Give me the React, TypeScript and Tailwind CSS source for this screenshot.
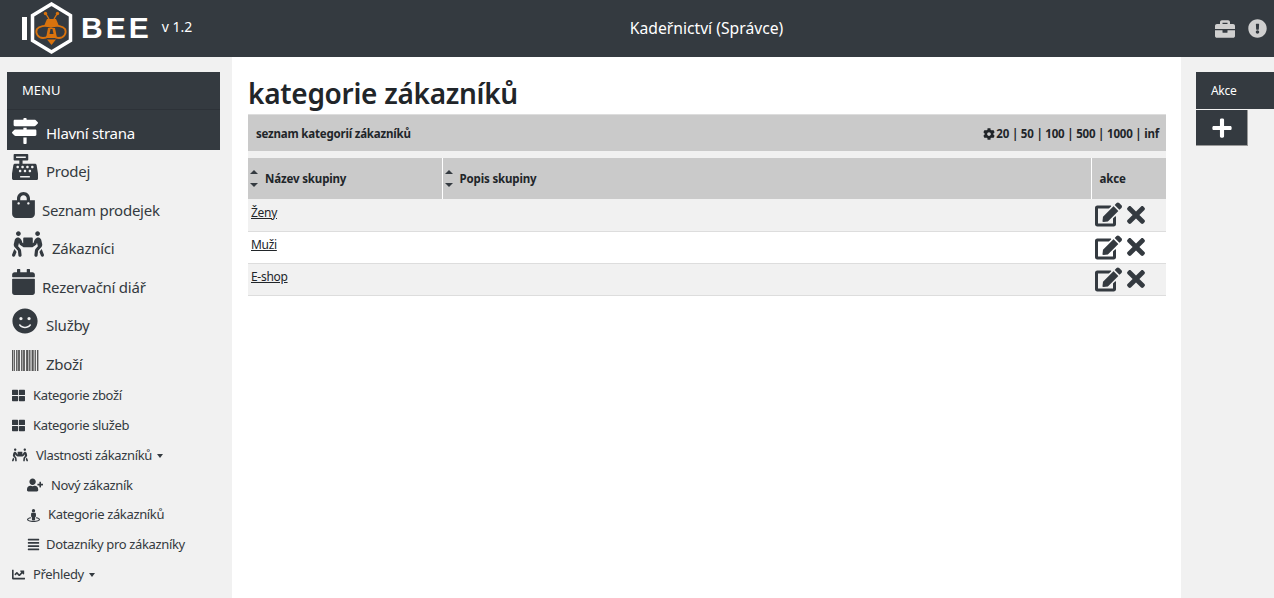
import React from "react";
import {
  FaAlignJustify,
  FaBriefcase,
  FaCalendar,
  FaCashRegister,
  FaChartLine,
  FaCog,
  FaEdit,
  FaExclamationCircle,
  FaMapSigns,
  FaPeopleCarry,
  FaPlus,
  FaShoppingBag,
  FaSmile,
  FaStreetView,
  FaTable,
  FaThLarge,
  FaTimes,
  FaUserPlus,
} from "react-icons/fa";

const Barcode = () => (
  <svg width="27" height="21" viewBox="0 0 27 21" className="shrink-0 mb-[4px] mr-[-1px]">
    {[0, 2, 4, 5.5, 7, 9, 10.5, 12, 14, 15, 17, 18.5, 20, 21.5, 23, 25].map((x, i) => (
      <rect key={i} x={x} y="0" width={i % 3 === 0 ? 1.4 : 0.9} height="21" fill="#555" />
    ))}
  </svg>
);

const Logo = () => (
  <div className="flex items-center pl-[22px] h-full">
    <span className="w-[5px] h-[23px] bg-white mt-[-1px]" />
    <svg width="48" height="54" viewBox="0 0 48 54" className="shrink-0">
      <polygon points="24.5,2 43.5,13.5 43.5,38.5 24.5,50 5.5,38.5 5.5,13.5" fill="none" stroke="#fff" strokeWidth="3.5" />
      <g fill="none" stroke="#d9730d">
        <path
          d="M24 25C18 23 12 24 10 27C8 31 11 36 16 36C20 36 23 33 24 29C25 33 28 36 32 36C37 36 40 31 38 27C36 24 30 23 24 25Z"
          strokeWidth="1.8"
        />
        <path d="M19 12l3 5M30 12l-3 5" strokeWidth="1.4" />
      </g>
      <g fill="#d9730d">
        <circle cx="18.5" cy="11.5" r="1.7" />
        <circle cx="30.5" cy="11.5" r="1.7" />
        <path d="M20 17h9l3 7h-15z" />
        <polygon points="21,26 28,26 30,36 19,36" />
        <polygon points="20,37.5 29,37.5 24.5,43" />
      </g>
      <polygon points="23.5,27 25.5,27 26.5,32 22.5,32" fill="#343a40" />
    </svg>
    <span className="font-['Liberation_Sans',sans-serif] font-bold text-white text-[30px] leading-none tracking-[3px] ml-[6px] mt-[-1px]">
      BEE
    </span>
    <span className="text-white text-[14px] ml-[10px] mb-[5px]">v 1.2</span>
  </div>
);

const mainItems = [
  { label: "Prodej", icon: <FaCashRegister className="w-[26px] h-[26px] shrink-0 mb-[3px]" /> },
  { label: "Seznam prodejek", icon: <FaShoppingBag className="w-[23px] h-[26px] shrink-0 mb-[3px] mr-[-1px]" /> },
  { label: "Zákazníci", icon: <FaPeopleCarry className="w-[32px] h-[26px] shrink-0 mb-[3px]" /> },
  { label: "Rezervační diář", icon: <FaCalendar className="w-[23px] h-[26px] shrink-0 mb-[3px] mr-[-1px]" /> },
  { label: "Služby", icon: <FaSmile className="w-[26px] h-[26px] shrink-0 mb-[3px]" /> },
  { label: "Zboží", icon: <Barcode /> },
];

const Caret = () => (
  <span className="inline-block ml-[5px] align-middle border-t-[4px] border-x-[3.5px] border-x-transparent border-t-[#343a40]" />
);

const SortArrows = () => (
  <span className="flex flex-col gap-[9px] shrink-0">
    <span className="border-b-[4px] border-x-[4px] border-x-transparent border-b-[#343a40]" />
    <span className="border-t-[4px] border-x-[4px] border-x-transparent border-t-[#343a40]" />
  </span>
);

const SmallItem = ({
  icon,
  label,
  caret,
  sub,
}: {
  icon: React.ReactNode;
  label?: string;
  caret?: boolean;
  sub?: boolean;
}) => (
  <div className={`flex items-center h-[29.8px] gap-2 text-[13px] text-[#343a40] ${sub ? "pl-[27px]" : "pl-[12px]"}`}>
    {icon}
    {label && (
      <span className="tracking-[-0.35px]">
        {label}
        {caret && <Caret />}
      </span>
    )}
  </div>
);

const rows = ["Ženy", "Muži", "E-shop"];

export default function App() {
  return (
    <div className="h-screen overflow-hidden bg-white font-['Noto_Sans',sans-serif] text-[#212529]">
      <header className="grid grid-cols-[232px_1fr_93px] h-[57px] bg-[#343a40] text-white">
        <div className="whitespace-nowrap">
          <Logo />
        </div>
        <div className="flex items-center justify-center text-[15.7px]">Kadeřnictví (Správce)</div>
        <div className="flex items-center justify-end gap-[13px] pr-[7px] text-[#cfcfcf]">
          <FaBriefcase size={20} />
          <FaExclamationCircle size={19} />
        </div>
      </header>

      <div className="grid grid-cols-[232px_1fr_93px] h-[541px]">
        <aside className="bg-[#f1f1f1] pt-[15px]">
          <div className="ml-[7px] mr-[12px] bg-[#343a40] text-white">
            <div className="h-[38px] flex items-center pl-[15px] pt-px text-[13px] border-b border-[#2d3238]">MENU</div>
            <div className="h-[40px] flex items-end gap-2 pl-[5px] pb-[6px] text-[15px]">
              <FaMapSigns size={26} className="shrink-0" />
              <span className="tracking-[-0.3px]">Hlavní strana</span>
            </div>
          </div>
          <div className="text-[#343a40]">
            {mainItems.map((item) => (
              <div key={item.label} className="flex items-end gap-2 h-[38.5px] pl-[12px] pb-[6px] text-[15px]">
                {item.icon}
                <span className="tracking-[-0.25px]">{item.label}</span>
              </div>
            ))}
          </div>
          <SmallItem icon={<FaThLarge size={13} />} label="Kategorie zboží" />
          <SmallItem icon={<FaThLarge size={13} />} label="Kategorie služeb" />
          <SmallItem icon={<FaPeopleCarry size={16} />} label="Vlastnosti zákazníků" caret />
          <SmallItem sub icon={<FaUserPlus size={16} />} label="Nový zákazník" />
          <SmallItem sub icon={<FaStreetView size={13} />} label="Kategorie zákazníků" />
          <SmallItem sub icon={<FaAlignJustify size={13} className="mr-[-2px]" />} label="Dotazníky pro zákazníky" />
          <SmallItem icon={<FaChartLine size={13} />} label="Přehledy" caret />
          <SmallItem icon={<FaTable size={13} />} />
        </aside>

        <main className="pl-4 pr-[15px] pt-[16px]">
          <h1 className="text-[28px] leading-[41px] font-semibold tracking-[-0.3px] mb-0">kategorie zákazníků</h1>
          <div className="flex items-center justify-between h-[37px] bg-[#cacaca] border-t border-[#ddd] pl-2 pr-[7px] pt-[1px] text-[11.5px] font-bold">
            <span className="tracking-[-0.2px]">seznam kategorií zákazníků</span>
            <span className="flex items-center tracking-[-0.2px]">
              <FaCog size={12} className="mr-[1px]" />
              20 | 50 | 100 | 500 | 1000 | inf
            </span>
          </div>
          <div className="h-[7px] bg-[#f1f1f1]" />
          <table className="w-full table-fixed border-collapse text-[12px]">
            <thead className="text-[11.5px]">
              <tr className="h-[41px] bg-[#cacaca] text-left">
                <th className="w-[194px] border-r border-white p-0 font-bold">
                  <span className="flex items-center gap-[7px] pl-[2px] tracking-[-0.15px]">
                    <SortArrows />
                    Název skupiny
                  </span>
                </th>
                <th className="border-r border-white p-0 font-bold">
                  <span className="flex items-center gap-[7px] pl-[2px] tracking-[-0.15px]">
                    <SortArrows />
                    Popis skupiny
                  </span>
                </th>
                <th className="w-[75px] p-0 pl-2 font-bold tracking-[-0.15px]">akce</th>
              </tr>
            </thead>
            <tbody>
              {rows.map((row, i) => (
                <tr key={row} className={`h-[32px] border-b border-[#ddd] ${i % 2 === 0 ? "bg-[#f1f1f1]" : "bg-white"}`}>
                  <td className="p-0 pl-[3px] pb-[4px] align-middle">
                    <a href="#" className="underline tracking-[-0.3px]">{row}</a>
                  </td>
                  <td className="p-0" />
                  <td className="p-0 pl-1">
                    <div className="flex items-center gap-[5px] text-[#343a40]">
                      <FaEdit size={27} />
                      <FaTimes className="w-[18px] h-[26px]" />
                    </div>
                  </td>
                </tr>
              ))}
            </tbody>
          </table>
        </main>

        <aside className="bg-[#f1f1f1] pt-[15px] pl-[15px]">
          <div className="h-[37px] flex items-center pl-[15px] bg-[#343a40] text-white text-[12px] tracking-[-0.3px]">
            Akce
          </div>
          <div className="mt-px w-[52px] h-[36px] flex items-center justify-center bg-[#343a40] text-white border-r border-b border-[#999]">
            <FaPlus size={22} />
          </div>
        </aside>
      </div>
    </div>
  );
}
